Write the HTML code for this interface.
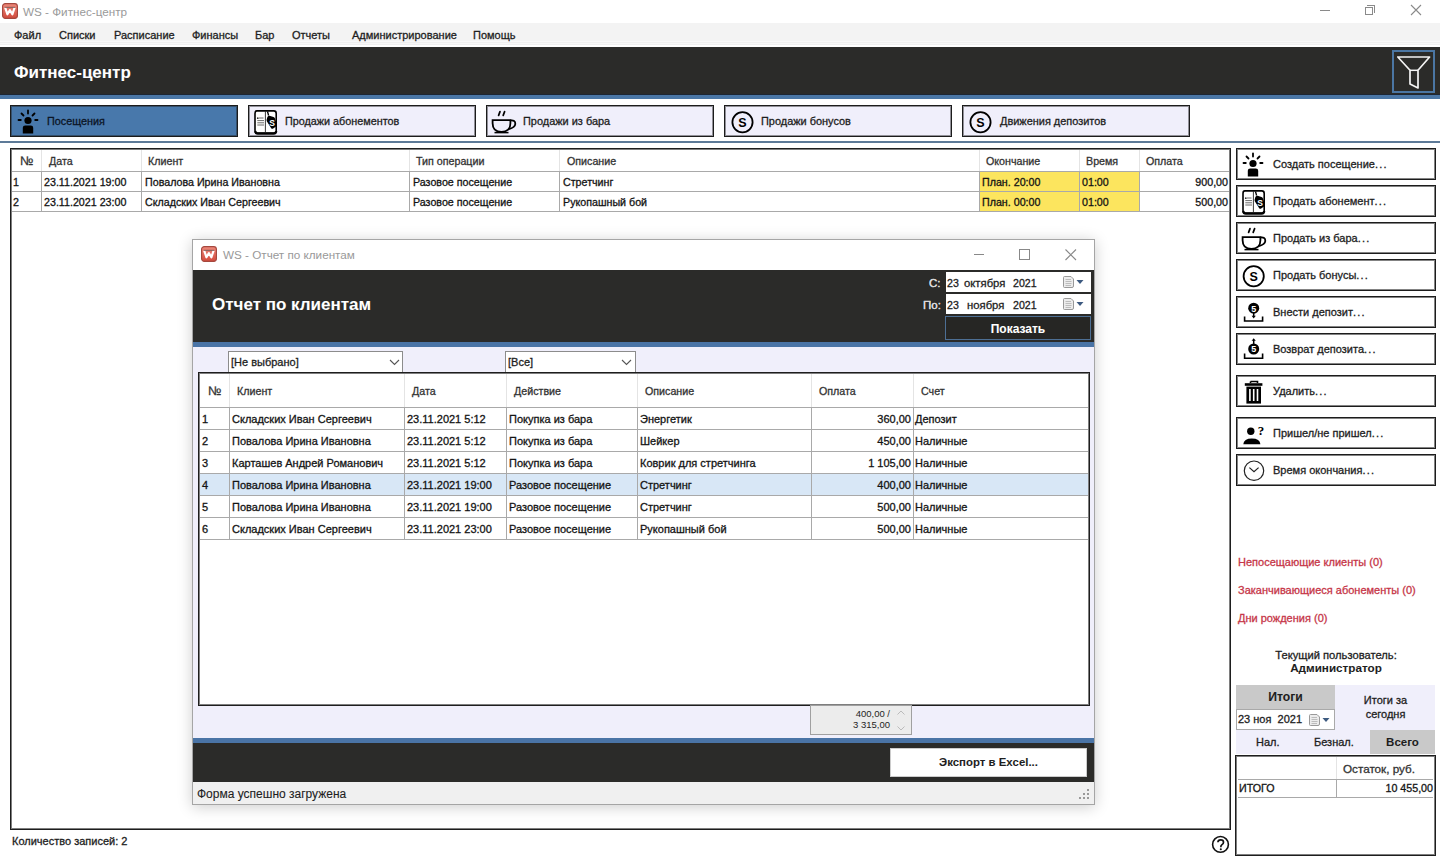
<!DOCTYPE html>
<html><head><meta charset="utf-8">
<style>
*{box-sizing:border-box;margin:0;padding:0}
body{width:1440px;height:860px;overflow:hidden;background:#fff;font-family:"Liberation Sans",sans-serif;font-size:11px;color:#1e1e1e;position:relative;-webkit-text-stroke-width:0.3px}
.a{position:absolute}
svg text{-webkit-text-stroke-width:0}
[style*="bold"]{-webkit-text-stroke-width:0.05px}
.t{position:absolute;white-space:nowrap;line-height:14px}
.menu span{position:absolute;top:28px;font-size:11px;color:#1e1e1e;line-height:14px}
.tab{position:absolute;top:105px;width:228px;height:32px;border:1px solid #1c1c1c;box-shadow:inset 0 0 0 1px rgba(30,30,30,0.45);background:#f0effb}
.tab .lbl{position:absolute;left:36px;top:8px;font-size:10.8px;line-height:14px;color:#1e1e1e}
.tab svg,.rb svg{position:absolute}
.rb{position:absolute;left:1236px;width:200px;height:32px;border:1px solid #1c1c1c;box-shadow:inset 0 0 0 1px rgba(30,30,30,0.55);background:#fff}
.rb .lbl{position:absolute;left:36px;top:8px;font-size:11px;line-height:14px;color:#1e1e1e}
.grid{position:absolute;border:1px solid #1e1e1e;box-shadow:inset 0 0 0 1px rgba(40,40,40,0.6);background:#fff}
.hl{position:absolute;height:1px;background:#a9a9a9}
.vl{position:absolute;width:1px;background:#a9a9a9}
.vh{position:absolute;width:1px;background:#e4e4e4}
.c{position:absolute;white-space:nowrap;line-height:14px;font-size:10.7px;color:#141414}
.h{position:absolute;white-space:nowrap;line-height:14px;font-size:10.7px;color:#333}
.r{text-align:right}
.red{position:absolute;color:#c63648;font-size:11px;line-height:14px;white-space:nowrap}
</style></head><body>
<svg class="a" style="left:2px;top:3px" width="16" height="16" viewBox="0 0 17 17"><defs><linearGradient id="lg1" x1="0" y1="0" x2="0" y2="1"><stop offset="0" stop-color="#ef8a7c"/><stop offset="1" stop-color="#d24a3c"/></linearGradient></defs><rect x="0.6" y="0.6" width="15.8" height="15.8" rx="3" fill="url(#lg1)" stroke="#a5483e" stroke-width="1.2"/><path d="M3.4 5 L5.8 12 L8.4 7.6 L11 12 L13.4 5" fill="none" stroke="#fff" stroke-width="2.3" stroke-linejoin="round"/><path d="M3 4.6H14" stroke="#6a5a58" stroke-width="0.9"/><path d="M11 6 L13.6 6" stroke="#fff" stroke-width="0"/></svg>
<div class="t" style="left:23px;top:5px;color:#9a9a9a;font-size:11.7px;-webkit-text-stroke-width:0">WS - Фитнес-центр</div>
<div class="a" style="left:1320px;top:10px;width:10px;height:1px;background:#8a8a8a"></div>
<div class="a" style="left:1365px;top:7px;width:8px;height:8px;border:1px solid #8a8a8a"></div>
<div class="a" style="left:1367px;top:5px;width:8px;height:8px;border-top:1px solid #8a8a8a;border-right:1px solid #8a8a8a"></div>
<svg class="a" style="left:1410px;top:4px" width="12" height="12"><path d="M1 1L11 11M11 1L1 11" stroke="#8a8a8a" stroke-width="1.1"/></svg>
<div class="a" style="left:0;top:23px;width:1440px;height:18px;background:#f3f3f3"></div>
<div class="a" style="left:0;top:41px;width:1440px;height:1px;background:#f8f8f8"></div>
<div class="a" style="left:0;top:42px;width:1440px;height:1px;background:#efefef"></div>
<div class="a" style="left:0;top:43px;width:1440px;height:1px;background:#f7f7f7"></div>
<div class="a" style="left:0;top:44px;width:1440px;height:1px;background:#f0f0f0"></div>
<div class="menu"><span style="left:14px">Файл</span><span style="left:59px">Списки</span><span style="left:114px">Расписание</span><span style="left:192px">Финансы</span><span style="left:255px">Бар</span><span style="left:292px">Отчеты</span><span style="left:352px">Администрирование</span><span style="left:473px">Помощь</span></div>
<div class="a" style="left:0;top:47px;width:1440px;height:48px;background:#2b2b29"></div>
<div class="a" style="left:0;top:94px;width:1440px;height:1px;background:#1d2633"></div>
<div class="a" style="left:0;top:95px;width:1440px;height:4px;background:#4b77a6"></div>
<div class="t" style="left:14px;top:63px;color:#fff;font-weight:bold;font-size:17px;line-height:20px">Фитнес-центр</div>
<div class="a" style="left:1392px;top:50px;width:43px;height:43px;border:2px solid #4b76a3"></div>
<svg class="a" style="left:1396px;top:54px" width="36" height="36" viewBox="0 0 36 36"><path d="M1.8 3 L33.6 3 L22 16.3 L22 34 L14 30 L14 16.3 Z" fill="none" stroke="#f4f4f4" stroke-width="1.7" stroke-linejoin="round"/><path d="M14 16.3 L22 16.3" stroke="#f4f4f4" stroke-width="1.5"/></svg>
<div class="tab" style="left:10px;background:#4878ab"><span class="lbl" style="left:36px;color:#0b1526">Посещения</span></div>
<svg class="a" style="left:17px;top:109px" width="24" height="26" viewBox="0 0 24 26"><g stroke="#000" stroke-width="1.8" stroke-linecap="round"><path d="M11 1.5V4.5"/><path d="M4.5 4.5L6.5 6.5"/><path d="M17.5 4.5L15.5 6.5"/><path d="M1.5 11H3.8"/><path d="M18.2 11H20.5"/></g><circle cx="11" cy="11.5" r="3.6" fill="#000"/><path d="M5.8 24.5V18.8Q5.8 16.5 8.2 16.5H13.8Q16.2 16.5 16.2 18.8V24.5Z" fill="#000"/></svg>
<div class="tab" style="left:248px"><span class="lbl">Продажи абонементов</span></div>
<svg class="a" style="left:253px;top:109px" width="25" height="26" viewBox="0 0 25 26"><path d="M3.8 1.9H20.8Q23.2 1.9 23.2 4.4V21.5Q23.2 24 20.8 24H4.2Q2 24 2 21.5V4.4Q2 1.9 3.8 1.9Z" fill="#fff" stroke="#000" stroke-width="1.6"/><path d="M2.2 22Q2.5 24.6 4.8 24.6H20.5Q23.2 24.6 23.2 22" fill="none" stroke="#000" stroke-width="2.2"/><path d="M12.4 2V23.5" stroke="#222" stroke-width="0.9"/><g stroke="#444" stroke-width="0.8"><path d="M6 9H10.5"/><path d="M4.3 11.6H11"/><path d="M4.3 13.8H11"/><path d="M4.3 16H11"/></g><circle cx="4.8" cy="9.2" r="0.9" fill="#333"/><path d="M14.5 2.5L15.6 6.5" stroke="#000" stroke-width="1.3"/><path d="M14.2 8.6Q14.6 6.6 16.5 6.8L20.5 8Q21.5 8.3 22 9.5L23.8 15Q24.2 16.5 23 17.5L20.2 19.6Q19 20.3 18.2 19.2L13.8 12.2Q13.3 11.2 14.2 8.6Z" fill="#000"/><text x="16.2" y="17" font-family="Liberation Sans" font-weight="bold" font-size="8.5" fill="#fff">S</text></svg>
<div class="tab" style="left:486px"><span class="lbl" style="font-size:10.95px">Продажи из бара</span></div>
<svg class="a" style="left:491px;top:109px" width="27" height="26" viewBox="0 0 27 26"><g stroke="#000" stroke-width="1.7" stroke-linecap="round"><path d="M9 2.6L7.6 6.4"/><path d="M13.6 2.6L12.2 6.4"/></g><path d="M1.6 11.2H19.4V14.2Q19.4 22.8 10.5 22.8Q1.6 22.8 1.6 14.2Z" fill="none" stroke="#000" stroke-width="1.8"/><path d="M19.2 11.6Q24.5 10.8 24.3 15Q24 18.6 18 20" fill="none" stroke="#000" stroke-width="1.8"/><path d="M3.5 23.6H17.5" stroke="#000" stroke-width="1.5"/></svg>
<div class="tab" style="left:724px"><span class="lbl" style="font-size:10.95px">Продажи бонусов</span></div>
<svg class="a" style="left:730px;top:110px" width="26" height="26" viewBox="0 0 26 26"><circle cx="12.5" cy="12.2" r="10.1" fill="none" stroke="#000" stroke-width="1.8"/><text x="12.5" y="16.7" text-anchor="middle" font-family="Liberation Sans" font-weight="bold" font-size="12.5" fill="#000">S</text></svg>
<div class="tab" style="left:962px"><span class="lbl" style="left:37px;font-size:10.95px">Движения депозитов</span></div>
<svg class="a" style="left:968px;top:110px" width="26" height="26" viewBox="0 0 26 26"><circle cx="12.5" cy="12.2" r="10.1" fill="none" stroke="#000" stroke-width="1.8"/><text x="12.5" y="16.7" text-anchor="middle" font-family="Liberation Sans" font-weight="bold" font-size="12.5" fill="#000">S</text></svg>
<div class="a" style="left:0;top:141px;width:1440px;height:2px;background:#5d7a98"></div>
<div class="grid" style="left:10px;top:148px;width:1221px;height:682px"></div>
<div class="vh" style="left:41px;top:150px;height:21px"></div>
<div class="vh" style="left:141px;top:150px;height:21px"></div>
<div class="vh" style="left:409px;top:150px;height:21px"></div>
<div class="vh" style="left:559px;top:150px;height:21px"></div>
<div class="vh" style="left:979px;top:150px;height:21px"></div>
<div class="vh" style="left:1079px;top:150px;height:21px"></div>
<div class="vh" style="left:1139px;top:150px;height:21px"></div>
<div class="a" style="left:979px;top:171px;width:160px;height:40px;background:#fce55e"></div>
<div class="hl" style="left:12px;top:171px;width:1217px"></div>
<div class="hl" style="left:12px;top:191px;width:1217px"></div>
<div class="hl" style="left:12px;top:211px;width:1217px"></div>
<div class="vl" style="left:41px;top:172px;height:39px"></div>
<div class="vl" style="left:141px;top:172px;height:39px"></div>
<div class="vl" style="left:409px;top:172px;height:39px"></div>
<div class="vl" style="left:559px;top:172px;height:39px"></div>
<div class="vl" style="left:979px;top:172px;height:39px"></div>
<div class="vl" style="left:1079px;top:172px;height:39px"></div>
<div class="vl" style="left:1139px;top:172px;height:39px"></div>
<div class="h" style="left:20px;top:154px"><span style="font-size:12.5px">№</span></div>
<div class="h" style="left:49px;top:154px">Дата</div>
<div class="h" style="left:148px;top:154px">Клиент</div>
<div class="h" style="left:416px;top:154px">Тип операции</div>
<div class="h" style="left:567px;top:154px">Описание</div>
<div class="h" style="left:986px;top:154px">Окончание</div>
<div class="h" style="left:1086px;top:154px">Время</div>
<div class="h" style="left:1146px;top:154px">Оплата</div>
<div class="c" style="left:13px;top:175px">1</div>
<div class="c" style="left:44px;top:175px">23.11.2021 19:00</div>
<div class="c" style="left:145px;top:175px">Повалова Ирина Ивановна</div>
<div class="c" style="left:413px;top:175px">Разовое посещение</div>
<div class="c" style="left:563px;top:175px">Стретчинг</div>
<div class="c" style="left:982px;top:175px">План. 20:00</div>
<div class="c" style="left:1082px;top:175px">01:00</div>
<div class="c r" style="left:1139px;width:89px;top:175px">900,00</div>
<div class="c" style="left:13px;top:195px">2</div>
<div class="c" style="left:44px;top:195px">23.11.2021 23:00</div>
<div class="c" style="left:145px;top:195px">Складских Иван Сергеевич</div>
<div class="c" style="left:413px;top:195px">Разовое посещение</div>
<div class="c" style="left:563px;top:195px">Рукопашный бой</div>
<div class="c" style="left:982px;top:195px">План. 00:00</div>
<div class="c" style="left:1082px;top:195px">01:00</div>
<div class="c r" style="left:1139px;width:89px;top:195px">500,00</div>
<div class="rb" style="top:148px"><span class="lbl">Создать посещение<span style='letter-spacing:1.2px'>...</span></span></div>
<svg class="a" style="left:1242px;top:152px" width="24" height="26" viewBox="0 0 24 26"><g stroke="#000" stroke-width="1.8" stroke-linecap="round"><path d="M11 1.5V4.5"/><path d="M4.5 4.5L6.5 6.5"/><path d="M17.5 4.5L15.5 6.5"/><path d="M1.5 11H3.8"/><path d="M18.2 11H20.5"/></g><circle cx="11" cy="11.5" r="3.6" fill="#000"/><path d="M5.8 24.5V18.8Q5.8 16.5 8.2 16.5H13.8Q16.2 16.5 16.2 18.8V24.5Z" fill="#000"/></svg>
<div class="rb" style="top:185px"><span class="lbl">Продать абонемент<span style='letter-spacing:1.2px'>...</span></span></div>
<svg class="a" style="left:1241px;top:189px" width="25" height="26" viewBox="0 0 25 26"><path d="M3.8 1.9H20.8Q23.2 1.9 23.2 4.4V21.5Q23.2 24 20.8 24H4.2Q2 24 2 21.5V4.4Q2 1.9 3.8 1.9Z" fill="#fff" stroke="#000" stroke-width="1.6"/><path d="M2.2 22Q2.5 24.6 4.8 24.6H20.5Q23.2 24.6 23.2 22" fill="none" stroke="#000" stroke-width="2.2"/><path d="M12.4 2V23.5" stroke="#222" stroke-width="0.9"/><g stroke="#444" stroke-width="0.8"><path d="M6 9H10.5"/><path d="M4.3 11.6H11"/><path d="M4.3 13.8H11"/><path d="M4.3 16H11"/></g><circle cx="4.8" cy="9.2" r="0.9" fill="#333"/><path d="M14.5 2.5L15.6 6.5" stroke="#000" stroke-width="1.3"/><path d="M14.2 8.6Q14.6 6.6 16.5 6.8L20.5 8Q21.5 8.3 22 9.5L23.8 15Q24.2 16.5 23 17.5L20.2 19.6Q19 20.3 18.2 19.2L13.8 12.2Q13.3 11.2 14.2 8.6Z" fill="#000"/><text x="16.2" y="17" font-family="Liberation Sans" font-weight="bold" font-size="8.5" fill="#fff">S</text></svg>
<div class="rb" style="top:222px"><span class="lbl">Продать из бара<span style='letter-spacing:1.2px'>...</span></span></div>
<svg class="a" style="left:1241px;top:226px" width="27" height="26" viewBox="0 0 27 26"><g stroke="#000" stroke-width="1.7" stroke-linecap="round"><path d="M9 2.6L7.6 6.4"/><path d="M13.6 2.6L12.2 6.4"/></g><path d="M1.6 11.2H19.4V14.2Q19.4 22.8 10.5 22.8Q1.6 22.8 1.6 14.2Z" fill="none" stroke="#000" stroke-width="1.8"/><path d="M19.2 11.6Q24.5 10.8 24.3 15Q24 18.6 18 20" fill="none" stroke="#000" stroke-width="1.8"/><path d="M3.5 23.6H17.5" stroke="#000" stroke-width="1.5"/></svg>
<div class="rb" style="top:259px"><span class="lbl">Продать бонусы<span style='letter-spacing:1.2px'>...</span></span></div>
<svg class="a" style="left:1241px;top:263px" width="26" height="26" viewBox="0 0 26 26"><circle cx="12.7" cy="13.2" r="10.1" fill="none" stroke="#000" stroke-width="1.8"/><text x="12.7" y="17.7" text-anchor="middle" font-family="Liberation Sans" font-weight="bold" font-size="12.5" fill="#000">S</text></svg>
<div class="rb" style="top:296px"><span class="lbl">Внести депозит<span style='letter-spacing:1.2px'>...</span></span></div>
<svg class="a" style="left:1241px;top:300px" width="26" height="26" viewBox="0 0 26 26"><circle cx="12.7" cy="8.2" r="5.5" fill="#000"/><text x="12.7" y="11.6" text-anchor="middle" font-family="Liberation Sans" font-weight="bold" font-size="9" fill="#fff">5</text><path d="M12.7 13V16.5" stroke="#000" stroke-width="1.5"/><path d="M10.6 15.8L12.7 18.4L14.8 15.8Z" fill="#000"/><path d="M3.6 16.4V21H21.6V16.4" fill="none" stroke="#000" stroke-width="1.6"/></svg>
<div class="rb" style="top:333px"><span class="lbl">Возврат депозита<span style='letter-spacing:1.2px'>...</span></span></div>
<svg class="a" style="left:1241px;top:337px" width="26" height="26" viewBox="0 0 26 26"><path d="M12.7 3V7" stroke="#000" stroke-width="1.5"/><path d="M10.6 3.8L12.7 1.2L14.8 3.8Z" fill="#000"/><circle cx="12.7" cy="12" r="5.5" fill="#000"/><text x="12.7" y="15.4" text-anchor="middle" font-family="Liberation Sans" font-weight="bold" font-size="9" fill="#fff">5</text><path d="M3.6 16.6V21.2H21.6V16.6" fill="none" stroke="#000" stroke-width="1.6"/></svg>
<div class="rb" style="top:375px"><span class="lbl">Удалить<span style='letter-spacing:1.2px'>...</span></span></div>
<svg class="a" style="left:1241px;top:379px" width="26" height="26" viewBox="0 0 26 26"><path d="M9.5 2.5H16.5V4" fill="none" stroke="#000" stroke-width="1.6"/><path d="M9.5 2.5V4" stroke="#000" stroke-width="1.6"/><path d="M3.8 5.5H21.4" stroke="#000" stroke-width="2.6"/><path d="M5.4 7.6H20V24.6H5.4Z" fill="#000"/><g fill="#fff"><rect x="8.1" y="10" width="1.6" height="12"/><rect x="11.9" y="10" width="1.6" height="12"/><rect x="15.7" y="10" width="1.6" height="12"/></g></svg>
<div class="rb" style="top:417px"><span class="lbl">Пришел/не пришел<span style='letter-spacing:1.2px'>...</span></span></div>
<svg class="a" style="left:1241px;top:421px" width="26" height="26" viewBox="0 0 26 26"><circle cx="9.8" cy="10.2" r="3.7" fill="#000"/><path d="M2.3 23.2Q2.8 17.6 10.8 17.6Q19 17.6 19.4 23.2Z" fill="#000"/><text x="16.8" y="14.2" font-family="Liberation Serif" font-weight="bold" font-size="13" fill="#000">?</text></svg>
<div class="rb" style="top:454px"><span class="lbl">Время окончания<span style='letter-spacing:1.2px'>...</span></span></div>
<svg class="a" style="left:1241px;top:458px" width="26" height="26" viewBox="0 0 26 26"><circle cx="13" cy="12.7" r="9.7" fill="none" stroke="#222" stroke-width="1.2"/><path d="M8.4 9.6L13 13.8L17.6 9.6" fill="none" stroke="#222" stroke-width="1.2"/></svg>
<div class="red" style="left:1238px;top:555px">Непосещающие клиенты (0)</div>
<div class="red" style="left:1238px;top:583px">Заканчивающиеся абонементы (0)</div>
<div class="red" style="left:1238px;top:611px">Дни рождения (0)</div>
<div class="t" style="left:1236px;width:200px;text-align:center;top:648px;font-size:11.2px">Текущий пользователь:</div>
<div class="t" style="left:1236px;width:200px;text-align:center;top:661px;font-weight:bold;font-size:11.7px">Администратор</div>
<div class="a" style="left:1236px;top:685px;width:199px;height:69px;background:#f0effb"></div>
<div class="a" style="left:1236px;top:685px;width:99px;height:24px;background:#c9c9c9"></div>
<div class="t" style="left:1236px;width:99px;text-align:center;top:690px;font-weight:bold;font-size:12.2px">Итоги</div>
<div class="t" style="left:1336px;width:99px;text-align:center;top:693px;line-height:14px">Итоги за<br>сегодня</div>
<div class="a" style="left:1236px;top:709px;width:99px;height:21px;background:#fff;border:1px solid #a9a9a9"></div>
<div class="t" style="left:1238px;top:712px">23 ноя&nbsp; 2021</div>
<svg class="a" style="left:1309px;top:714px" width="22" height="12" viewBox="0 0 22 12"><path d="M1.5 0.5H8L10.5 3V10Q10.5 11.5 9 11.5H1.5Q0.5 11.5 0.5 10.5V1.5Q0.5 0.5 1.5 0.5Z" fill="#ececec" stroke="#999" stroke-width="1"/><g stroke="#b0b0b0" stroke-width="0.8"><path d="M2.5 3.5H8M2.5 5.5H8.5M2.5 7.5H8.5M2.5 9.5H8"/></g><path d="M13.5 4H20.5L17 8Z" fill="#3d5a80"/></svg>
<div class="a" style="left:1370px;top:730px;width:65px;height:24px;background:#c9c9c9"></div>
<div class="t" style="left:1256px;top:735px">Нал.</div>
<div class="t" style="left:1314px;top:735px">Безнал.</div>
<div class="t" style="left:1370px;width:65px;text-align:center;top:735px;font-weight:bold;font-size:11.5px">Всего</div>
<div class="grid" style="left:1235px;top:755px;width:201px;height:101px"></div>
<div class="vh" style="left:1336px;top:757px;height:22px"></div>
<div class="hl" style="left:1238px;top:779px;width:195px"></div>
<div class="hl" style="left:1238px;top:797px;width:195px"></div>
<div class="vl" style="left:1336px;top:780px;height:17px"></div>
<div class="c" style="left:1343px;top:762px;color:#333;font-size:11.7px">Остаток, руб.</div>
<div class="c" style="left:1239px;top:781px">ИТОГО</div>
<div class="c r" style="left:1336px;width:97px;top:781px">10 455,00</div>
<div class="t" style="left:12px;top:834px">Количество записей: 2</div>
<svg class="a" style="left:1211px;top:835px" width="19" height="19" viewBox="0 0 19 19"><circle cx="9.5" cy="9.4" r="7.9" fill="none" stroke="#111" stroke-width="1.6"/><path d="M6.9 7.3Q7 4.9 9.7 4.9Q12.5 4.9 12.5 7.2Q12.5 8.6 11 9.6Q9.8 10.4 9.8 12.2" fill="none" stroke="#111" stroke-width="1.7"/><circle cx="9.8" cy="14.3" r="1.05" fill="#111"/></svg>
<div class="a" style="left:192px;top:239px;width:903px;height:566px;border:1px solid #a5a5a5;background:#fff;box-shadow:0 2px 14px rgba(0,0,0,0.2)"></div>
<svg class="a" style="left:201px;top:246px" width="16" height="16" viewBox="0 0 17 17"><defs><linearGradient id="lg2" x1="0" y1="0" x2="0" y2="1"><stop offset="0" stop-color="#ef8a7c"/><stop offset="1" stop-color="#d24a3c"/></linearGradient></defs><rect x="0.6" y="0.6" width="15.8" height="15.8" rx="3" fill="url(#lg2)" stroke="#a5483e" stroke-width="1.2"/><path d="M3.4 5 L5.8 12 L8.4 7.6 L11 12 L13.4 5" fill="none" stroke="#fff" stroke-width="2.3" stroke-linejoin="round"/><path d="M3 4.6H14" stroke="#6a5a58" stroke-width="0.9"/></svg>
<div class="t" style="left:223px;top:248px;color:#999;font-size:11.7px;-webkit-text-stroke-width:0">WS - Отчет по клиентам</div>
<div class="a" style="left:974px;top:254px;width:10px;height:1px;background:#888"></div>
<div class="a" style="left:1019px;top:249px;width:11px;height:11px;border:1px solid #888"></div>
<svg class="a" style="left:1065px;top:249px" width="12" height="12"><path d="M0.5 0.5L11 11M11 0.5L0.5 11" stroke="#888" stroke-width="1.1"/></svg>
<div class="a" style="left:193px;top:270px;width:901px;height:72px;background:#2b2b29"></div>
<div class="a" style="left:193px;top:342px;width:901px;height:5px;background:#4a74a6"></div>
<div class="t" style="left:212px;top:295px;color:#fff;font-weight:bold;font-size:17px;line-height:20px">Отчет по клиентам</div>
<div class="t" style="left:929px;top:276px;color:#d8d8d8;font-size:11.5px;text-shadow:0 0 0.4px #fff">С:</div>
<div class="t" style="left:923px;top:298px;color:#d8d8d8;font-size:11.5px;text-shadow:0 0 0.4px #fff">По:</div>
<div class="a" style="left:946px;top:272px;width:145px;height:20px;background:#fff"></div>
<div class="a" style="left:946px;top:294px;width:145px;height:20px;background:#fff"></div>
<div class="t" style="left:947px;top:276px;font-size:10.6px">23</div>
<div class="t" style="left:964px;top:276px;font-size:11.3px">октября</div>
<div class="t" style="left:1013px;top:276px;font-size:10.6px">2021</div>
<div class="t" style="left:947px;top:298px;font-size:10.6px">23</div>
<div class="t" style="left:967px;top:298px;font-size:11.3px">ноября</div>
<div class="t" style="left:1013px;top:298px;font-size:10.6px">2021</div>
<svg class="a" style="left:1063px;top:276px" width="22" height="12" viewBox="0 0 22 12"><path d="M1.5 0.5H8L10.5 3V10Q10.5 11.5 9 11.5H1.5Q0.5 11.5 0.5 10.5V1.5Q0.5 0.5 1.5 0.5Z" fill="#ececec" stroke="#999" stroke-width="1"/><g stroke="#b0b0b0" stroke-width="0.8"><path d="M2.5 3.5H8M2.5 5.5H8.5M2.5 7.5H8.5M2.5 9.5H8"/></g><path d="M13.5 4H20.5L17 8Z" fill="#3d5a80"/></svg>
<svg class="a" style="left:1063px;top:298px" width="22" height="12" viewBox="0 0 22 12"><path d="M1.5 0.5H8L10.5 3V10Q10.5 11.5 9 11.5H1.5Q0.5 11.5 0.5 10.5V1.5Q0.5 0.5 1.5 0.5Z" fill="#ececec" stroke="#999" stroke-width="1"/><g stroke="#b0b0b0" stroke-width="0.8"><path d="M2.5 3.5H8M2.5 5.5H8.5M2.5 7.5H8.5M2.5 9.5H8"/></g><path d="M13.5 4H20.5L17 8Z" fill="#3d5a80"/></svg>
<div class="a" style="left:945px;top:316px;width:146px;height:24px;border:1px solid #4d6f94;background:#262624"></div>
<div class="t" style="left:945px;width:146px;text-align:center;top:322px;color:#fff;font-weight:bold;font-size:12px">Показать</div>
<div class="a" style="left:193px;top:347px;width:901px;height:391px;background:#f0effb"></div>
<div class="a" style="left:228px;top:351px;width:175px;height:22px;background:#fff;border:1px solid #8c8c8c"></div>
<div class="t" style="left:231px;top:355px">[Не выбрано]</div>
<svg class="a" style="left:389px;top:359px" width="11" height="7"><path d="M1 1L5.5 5.5L10 1" fill="none" stroke="#555" stroke-width="1.1"/></svg>
<div class="a" style="left:505px;top:351px;width:131px;height:22px;background:#fff;border:1px solid #8c8c8c"></div>
<div class="t" style="left:508px;top:355px">[Все]</div>
<svg class="a" style="left:621px;top:359px" width="11" height="7"><path d="M1 1L5.5 5.5L10 1" fill="none" stroke="#555" stroke-width="1.1"/></svg>
<div class="grid" style="left:198px;top:372px;width:892px;height:334px"></div>
<div class="vh" style="left:229px;top:374px;height:33px"></div>
<div class="vh" style="left:404px;top:374px;height:33px"></div>
<div class="vh" style="left:506px;top:374px;height:33px"></div>
<div class="vh" style="left:637px;top:374px;height:33px"></div>
<div class="vh" style="left:811px;top:374px;height:33px"></div>
<div class="vh" style="left:913px;top:374px;height:33px"></div>
<div class="a" style="left:200px;top:474px;width:888px;height:21px;background:#d8e7f6"></div>
<div class="hl" style="left:200px;top:407px;width:888px"></div>
<div class="hl" style="left:200px;top:429px;width:888px"></div>
<div class="hl" style="left:200px;top:451px;width:888px"></div>
<div class="hl" style="left:200px;top:473px;width:888px"></div>
<div class="hl" style="left:200px;top:495px;width:888px"></div>
<div class="hl" style="left:200px;top:517px;width:888px"></div>
<div class="hl" style="left:200px;top:539px;width:888px"></div>
<div class="vl" style="left:229px;top:408px;height:131px"></div>
<div class="vl" style="left:404px;top:408px;height:131px"></div>
<div class="vl" style="left:506px;top:408px;height:131px"></div>
<div class="vl" style="left:637px;top:408px;height:131px"></div>
<div class="vl" style="left:811px;top:408px;height:131px"></div>
<div class="vl" style="left:913px;top:408px;height:131px"></div>
<div class="h" style="left:208px;top:384px"><span style="font-size:12.5px">№</span></div>
<div class="h" style="left:237px;top:384px">Клиент</div>
<div class="h" style="left:412px;top:384px">Дата</div>
<div class="h" style="left:514px;top:384px">Действие</div>
<div class="h" style="left:645px;top:384px">Описание</div>
<div class="h" style="left:819px;top:384px">Оплата</div>
<div class="h" style="left:921px;top:384px">Счет</div>
<div class="c" style="left:202px;top:412px;font-size:11px">1</div>
<div class="c" style="left:232px;top:412px;font-size:11px">Складских Иван Сергеевич</div>
<div class="c" style="left:407px;top:412px;font-size:11px">23.11.2021 5:12</div>
<div class="c" style="left:509px;top:412px;font-size:11px">Покупка из бара</div>
<div class="c" style="left:640px;top:412px;font-size:11px">Энергетик</div>
<div class="c r" style="left:811px;width:100px;top:412px;font-size:11px">360,00</div>
<div class="c" style="left:915px;top:412px;font-size:11px">Депозит</div>
<div class="c" style="left:202px;top:434px;font-size:11px">2</div>
<div class="c" style="left:232px;top:434px;font-size:11px">Повалова Ирина Ивановна</div>
<div class="c" style="left:407px;top:434px;font-size:11px">23.11.2021 5:12</div>
<div class="c" style="left:509px;top:434px;font-size:11px">Покупка из бара</div>
<div class="c" style="left:640px;top:434px;font-size:11px">Шейкер</div>
<div class="c r" style="left:811px;width:100px;top:434px;font-size:11px">450,00</div>
<div class="c" style="left:915px;top:434px;font-size:11px">Наличные</div>
<div class="c" style="left:202px;top:456px;font-size:11px">3</div>
<div class="c" style="left:232px;top:456px;font-size:11px">Карташев Андрей Романович</div>
<div class="c" style="left:407px;top:456px;font-size:11px">23.11.2021 5:12</div>
<div class="c" style="left:509px;top:456px;font-size:11px">Покупка из бара</div>
<div class="c" style="left:640px;top:456px;font-size:11px">Коврик для стретчинга</div>
<div class="c r" style="left:811px;width:100px;top:456px;font-size:11px">1 105,00</div>
<div class="c" style="left:915px;top:456px;font-size:11px">Наличные</div>
<div class="c" style="left:202px;top:478px;font-size:11px">4</div>
<div class="c" style="left:232px;top:478px;font-size:11px">Повалова Ирина Ивановна</div>
<div class="c" style="left:407px;top:478px;font-size:11px">23.11.2021 19:00</div>
<div class="c" style="left:509px;top:478px;font-size:11px">Разовое посещение</div>
<div class="c" style="left:640px;top:478px;font-size:11px">Стретчинг</div>
<div class="c r" style="left:811px;width:100px;top:478px;font-size:11px">400,00</div>
<div class="c" style="left:915px;top:478px;font-size:11px">Наличные</div>
<div class="c" style="left:202px;top:500px;font-size:11px">5</div>
<div class="c" style="left:232px;top:500px;font-size:11px">Повалова Ирина Ивановна</div>
<div class="c" style="left:407px;top:500px;font-size:11px">23.11.2021 19:00</div>
<div class="c" style="left:509px;top:500px;font-size:11px">Разовое посещение</div>
<div class="c" style="left:640px;top:500px;font-size:11px">Стретчинг</div>
<div class="c r" style="left:811px;width:100px;top:500px;font-size:11px">500,00</div>
<div class="c" style="left:915px;top:500px;font-size:11px">Наличные</div>
<div class="c" style="left:202px;top:522px;font-size:11px">6</div>
<div class="c" style="left:232px;top:522px;font-size:11px">Складских Иван Сергеевич</div>
<div class="c" style="left:407px;top:522px;font-size:11px">23.11.2021 23:00</div>
<div class="c" style="left:509px;top:522px;font-size:11px">Разовое посещение</div>
<div class="c" style="left:640px;top:522px;font-size:11px">Рукопашный бой</div>
<div class="c r" style="left:811px;width:100px;top:522px;font-size:11px">500,00</div>
<div class="c" style="left:915px;top:522px;font-size:11px">Наличные</div>
<div class="a" style="left:810px;top:705px;width:102px;height:30px;background:#ececec;border:1px solid #a0a0a0"></div>
<div class="t" style="left:812px;width:78px;text-align:right;top:708px;font-size:9.5px;line-height:11px;-webkit-text-stroke-width:0">400,00 /<br>3 315,00</div>
<svg class="a" style="left:896px;top:709px" width="10" height="24"><path d="M1.5 5.5L5 2L8.5 5.5M1.5 17.5L5 21L8.5 17.5" fill="none" stroke="#bbb" stroke-width="1"/></svg>
<div class="a" style="left:193px;top:738px;width:901px;height:5px;background:#4a74a6"></div>
<div class="a" style="left:193px;top:743px;width:901px;height:39px;background:#2b2b29"></div>
<div class="a" style="left:890px;top:748px;width:197px;height:29px;background:#fff;border:1px solid #ccc"></div>
<div class="t" style="left:890px;width:197px;text-align:center;top:755px;font-weight:bold;font-size:11.4px">Экспорт в Excel...</div>
<div class="a" style="left:193px;top:782px;width:901px;height:22px;background:#f0f0f0"></div>
<div class="t" style="left:197px;top:787px;font-size:12px;-webkit-text-stroke-width:0.1px">Форма успешно загружена</div>
<svg class="a" style="left:1079px;top:789px" width="12" height="12"><g fill="#999"><rect x="8" y="0" width="2" height="2"/><rect x="4" y="4" width="2" height="2"/><rect x="8" y="4" width="2" height="2"/><rect x="0" y="8" width="2" height="2"/><rect x="4" y="8" width="2" height="2"/><rect x="8" y="8" width="2" height="2"/></g></svg>
</body></html>
